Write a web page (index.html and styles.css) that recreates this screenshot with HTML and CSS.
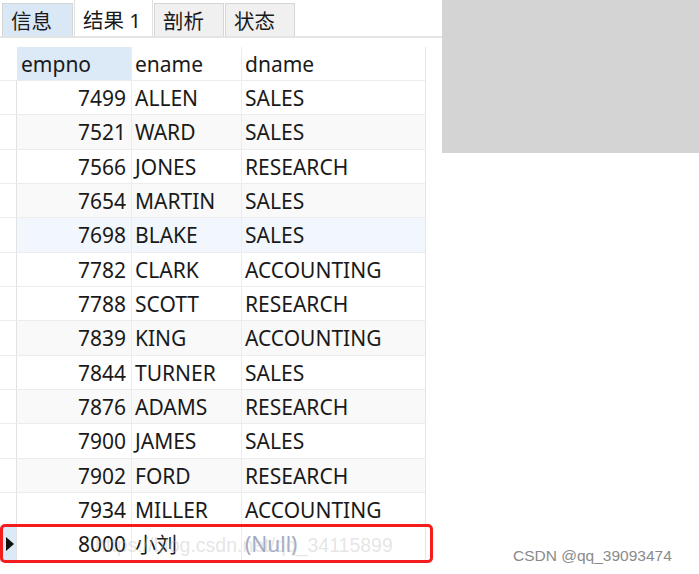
FILE: index.html
```html
<!DOCTYPE html>
<html>
<head>
<meta charset="utf-8">
<link rel="stylesheet" href="styles.css">
</head>
<body>
<div class="page">
  <div class="left">
    <div class="tabs">
      <div class="tab tab-info">信息</div>
      <div class="tab tab-active">结果 1</div>
      <div class="tab tab-plain">剖析</div>
      <div class="tab tab-plain">状态</div>
    </div>
    <div class="grid">
      <div class="row head">
        <div class="gut"></div>
        <div class="c c1 hsel">empno</div>
        <div class="c c2">ename</div>
        <div class="c c3">dname</div>
      </div>
      <div class="row"><div class="gut"></div><div class="c c1 num">7499</div><div class="c c2">ALLEN</div><div class="c c3">SALES</div></div>
      <div class="row alt"><div class="gut"></div><div class="c c1 num">7521</div><div class="c c2">WARD</div><div class="c c3">SALES</div></div>
      <div class="row"><div class="gut"></div><div class="c c1 num">7566</div><div class="c c2">JONES</div><div class="c c3">RESEARCH</div></div>
      <div class="row alt"><div class="gut"></div><div class="c c1 num">7654</div><div class="c c2">MARTIN</div><div class="c c3">SALES</div></div>
      <div class="row hover"><div class="gut"></div><div class="c c1 num">7698</div><div class="c c2">BLAKE</div><div class="c c3">SALES</div></div>
      <div class="row"><div class="gut"></div><div class="c c1 num">7782</div><div class="c c2">CLARK</div><div class="c c3">ACCOUNTING</div></div>
      <div class="row"><div class="gut"></div><div class="c c1 num">7788</div><div class="c c2">SCOTT</div><div class="c c3">RESEARCH</div></div>
      <div class="row alt"><div class="gut"></div><div class="c c1 num">7839</div><div class="c c2">KING</div><div class="c c3">ACCOUNTING</div></div>
      <div class="row"><div class="gut"></div><div class="c c1 num">7844</div><div class="c c2">TURNER</div><div class="c c3">SALES</div></div>
      <div class="row alt"><div class="gut"></div><div class="c c1 num">7876</div><div class="c c2">ADAMS</div><div class="c c3">RESEARCH</div></div>
      <div class="row"><div class="gut"></div><div class="c c1 num">7900</div><div class="c c2">JAMES</div><div class="c c3">SALES</div></div>
      <div class="row alt"><div class="gut"></div><div class="c c1 num">7902</div><div class="c c2">FORD</div><div class="c c3">RESEARCH</div></div>
      <div class="row"><div class="gut"></div><div class="c c1 num">7934</div><div class="c c2">MILLER</div><div class="c c3">ACCOUNTING</div></div>
      <div class="row last">
        <div class="gut gsel"><span class="tri"></span></div>
        <div class="c c1 num">8000</div>
        <div class="c c2">小刘</div>
        <div class="c c3 null">(Null)</div>
        <div class="wm">https://blog.csdn.net/qq_34115899</div>
        <div class="redbox"></div>
      </div>
    </div>
  </div>
  <div class="right">
    <div class="panel"></div>
    <div class="credit">CSDN @qq_39093474</div>
  </div>
</div>
</body>
</html>
```
FILE: styles.css
```css
html, body {
  margin: 0;
  padding: 0;
  background: #ffffff;
}
.page {
  display: flex;
  width: 699px;
  height: 574px;
  font-family: "Noto Sans", "Noto Sans CJK SC", sans-serif;
  color: #1a1a1a;
}
.left {
  width: 442px;
  display: flex;
  flex-direction: column;
}
.right {
  flex: 1;
  display: flex;
  flex-direction: column;
  justify-content: space-between;
}
.panel {
  height: 153px;
  background: #d4d4d4;
}
.credit {
  font-family: "Liberation Sans", Arial, sans-serif;
  font-size: 15.5px;
  color: #8a8a8a;
  padding: 0 0 9px 71px;
}
.tabs {
  display: flex;
  align-items: flex-end;
  height: 38px;
  padding-left: 2px;
  border-bottom: 2px solid #e4e4e4;
  box-sizing: border-box;
}
.tab {
  box-sizing: border-box;
  height: 33px;
  font-size: 20.5px;
  line-height: 34px;
  padding-left: 8px;
  border: 1px solid #d6d6d6;
  border-bottom: none;
  margin-right: 1px;
}
.tab-info {
  width: 71px;
  background: #dae8f6;
}
.tab-active {
  width: 79px;
  height: 37px;
  line-height: 40px;
  background: #ffffff;
  border-color: #e0e0e0;
}
.tab-plain {
  width: 70px;
  background: #f0f0f0;
}
.grid {
  margin-top: 9px;
  width: 425px;
  border-right: 1px solid #e6e6e6;
}
.row {
  position: relative;
  display: flex;
  height: 34.33px;
  box-sizing: border-box;
  border-bottom: 1px solid #ececec;
  font-size: 21px;
  line-height: 34px;
}
.row.head {
  height: 34px;
}
.row.alt {
  background: #f9f9f9;
}
.row.hover {
  background: #f1f7fd;
}
.gut {
  width: 17px;
  flex: none;
  background: #ffffff;
  border-right: 1px solid #e2e2e2;
  box-sizing: border-box;
  position: relative;
}
.head .gut {
  border-right: none;
}
.gsel {
  background: #dce9f6;
}
.tri {
  position: absolute;
  left: 6px;
  top: 10px;
  width: 0;
  height: 0;
  border-top: 7px solid transparent;
  border-bottom: 7px solid transparent;
  border-left: 8px solid #111111;
}
.c {
  box-sizing: border-box;
  border-right: 1px solid #ececec;
  white-space: nowrap;
  overflow: hidden;
}
.c1 {
  width: 115px;
  padding-right: 5px;
}
.c2 {
  width: 110px;
  padding-left: 3px;
}
.c3 {
  width: 182px;
  padding-left: 3px;
  border-right: none;
}
.head .c1 {
  padding-left: 4px;
}
.hsel {
  background: #dce9f6;
}
.num {
  text-align: right;
}
.null {
  color: #a3abc4;
}
.wm {
  position: absolute;
  left: 95px;
  top: 1px;
  font-family: "Liberation Sans", Arial, sans-serif;
  font-size: 19.5px;
  color: rgba(190, 190, 190, 0.4);
  pointer-events: none;
}
.redbox {
  position: absolute;
  left: 0;
  top: -3px;
  width: 433px;
  height: 39px;
  box-sizing: border-box;
  border: 3px solid #f41d1d;
  border-radius: 5px;
}
```
